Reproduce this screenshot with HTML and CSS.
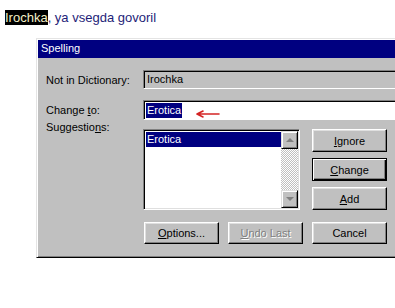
FILE: index.html
```html
<!DOCTYPE html>
<html>
<head>
<meta charset="utf-8">
<link rel="stylesheet" href="styles.css">
</head>
<body>
<p class="doc-line"><span class="hl">Irochka</span>, ya vsegda govoril</p>
<div class="dialog">
  <div class="titlebar">Spelling</div>
  <div class="body">
    <div class="row">
      <div class="label">Not in Dictionary:</div>
      <div class="field field-grey">Irochka</div>
    </div>
    <div class="row row-change">
      <div class="label">Change <u>t</u>o:</div>
      <div class="field field-white">
        <span class="sel">Erotica</span>
        <svg class="red-arrow" width="26" height="10" viewBox="0 0 26 10">
          <path d="M2 5 H24 M2 5 L8 2 M2 5 L8 8" stroke="#d42424" stroke-width="1.6" fill="none" stroke-linecap="round"/>
        </svg>
      </div>
    </div>
    <div class="sugg">
      <div class="label label-sugg">Suggestio<u>n</u>s:</div>
      <div class="listbox">
        <div class="list-items">
          <div class="item sel-item">Erotica</div>
        </div>
        <div class="scrollbar">
          <div class="sbtn">
            <svg width="8" height="5" viewBox="0 0 8 5"><polygon points="4,0 8,4 0,4" fill="#808080"/></svg>
          </div>
          <div class="track"></div>
          <div class="sbtn">
            <svg width="8" height="5" viewBox="0 0 8 5"><polygon points="0,0 8,0 4,4" fill="#808080"/></svg>
          </div>
        </div>
      </div>
      <div class="btn-col">
        <div class="btn"><u>I</u>gnore</div>
        <div class="btn btn-default"><u>C</u>hange</div>
        <div class="btn"><u>A</u>dd</div>
      </div>
    </div>
    <div class="bottom-row">
      <div class="btn"><u>O</u>ptions...</div>
      <div class="btn btn-disabled"><u>U</u>ndo Last</div>
      <div class="btn btn-cancel">Cancel</div>
    </div>
  </div>
</div>
</body>
</html>
```

FILE: styles.css
```css
html, body {
  margin: 0;
  padding: 0;
  background: #ffffff;
  overflow: hidden;
  width: 395px;
  height: 308px;
}

.doc-line {
  margin: 0;
  padding: 9px 0 0 5px;
  height: 18px;
  font-family: "Liberation Sans", Arial, sans-serif;
  font-size: 13px;
  line-height: 18px;
  color: #1e1e78;
}

.hl {
  background: #000000;
  color: #f4f0c8;
}

.dialog {
  margin: 11px 0 0 36px;
  width: 357px;
  overflow: hidden;
  background: #c0c0c0;
  border-left: 1px solid #e4e4e4;
  border-top: 1px solid #e4e4e4;
  border-bottom: 1px solid #000000;
  box-shadow: inset 1px 1px #ffffff, inset 0 -1px #808080;
  padding: 1px 0 1px 1px;
  font-family: "Liberation Sans", Arial, sans-serif;
  font-size: 11px;
  color: #000000;
}

.titlebar {
  height: 18px;
  line-height: 17px;
  background: #000080;
  color: #ffffff;
  padding-left: 3px;
  font-size: 11px;
}

.body {
  padding: 12px 0 12px 8px;
}

.row {
  display: flex;
  align-items: center;
}

.row-change {
  margin-top: 11px;
}

.label {
  width: 97px;
  flex: none;
}

.field {
  position: relative;
  flex: 1;
  box-sizing: border-box;
  border-style: solid;
  border-width: 1px 0 1px 1px;
  border-color: #808080 #ffffff #ffffff #808080;
  box-shadow: inset 1px 1px #000000;
  padding-left: 3px;
}

.field-grey {
  height: 19px;
  line-height: 17px;
  background: #c0c0c0;
}

.field-white {
  height: 20px;
  line-height: 16px;
  background: #ffffff;
  padding: 1px 0 0 2px;
}

.sel {
  display: inline-block;
  background: #000080;
  color: #ffffff;
  padding: 0 1px;
  height: 15px;
  line-height: 15px;
}

.red-arrow {
  position: absolute;
  left: 51px;
  top: 8px;
}

.sugg {
  display: grid;
  grid-template-columns: 97px 157px 12px 75px;
  grid-template-rows: 9px 81px;
}

.label-sugg {
  grid-column: 1;
  grid-row: 1 / 3;
  line-height: 14px;
}

.listbox {
  grid-column: 2;
  grid-row: 2;
  display: flex;
  box-sizing: border-box;
  border-style: solid;
  border-width: 1px;
  border-color: #808080 #ffffff #ffffff #808080;
  box-shadow: inset 1px 1px #000000, inset -1px -1px #dfdfdf;
  background: #ffffff;
  padding: 2px 1px 1px 2px;
}

.list-items {
  flex: 1;
}

.item {
  height: 15px;
  line-height: 15px;
  padding-left: 1px;
}

.sel-item {
  background: #000080;
  color: #ffffff;
}

.scrollbar {
  width: 17px;
  display: flex;
  flex-direction: column;
  margin-top: -1px;
}

.sbtn {
  height: 18px;
  box-sizing: border-box;
  background: #c0c0c0;
  border-style: solid;
  border-width: 1px;
  border-color: #dfdfdf #000000 #000000 #dfdfdf;
  box-shadow: inset 1px 1px #ffffff, inset -1px -1px #808080;
  display: flex;
  align-items: center;
  justify-content: center;
}

.track {
  flex: 1;
  background: repeating-conic-gradient(#c0c0c0 0 25%, #ffffff 0 50%) 0 0 / 2px 2px;
}

.btn-col {
  grid-column: 4;
  grid-row: 2;
  display: flex;
  flex-direction: column;
  gap: 6px;
}

.btn {
  width: 75px;
  height: 23px;
  box-sizing: border-box;
  background: #c0c0c0;
  border-style: solid;
  border-width: 1px;
  border-color: #ffffff #000000 #000000 #ffffff;
  box-shadow: inset -1px -1px #808080, inset 1px 1px #dfdfdf;
  display: flex;
  align-items: center;
  justify-content: center;
}

.btn-default {
  border: 1px solid #000000;
  box-shadow: inset 1px 1px #ffffff, inset -1px -1px #000000, inset -2px -2px #808080;
}

.btn-disabled {
  color: #808080;
  text-shadow: 1px 1px 0 #ffffff;
}

.bottom-row {
  display: flex;
  margin-top: 12px;
  padding-left: 98px;
  gap: 9px;
}

.bottom-row .btn {
  height: 22px;
}
```
